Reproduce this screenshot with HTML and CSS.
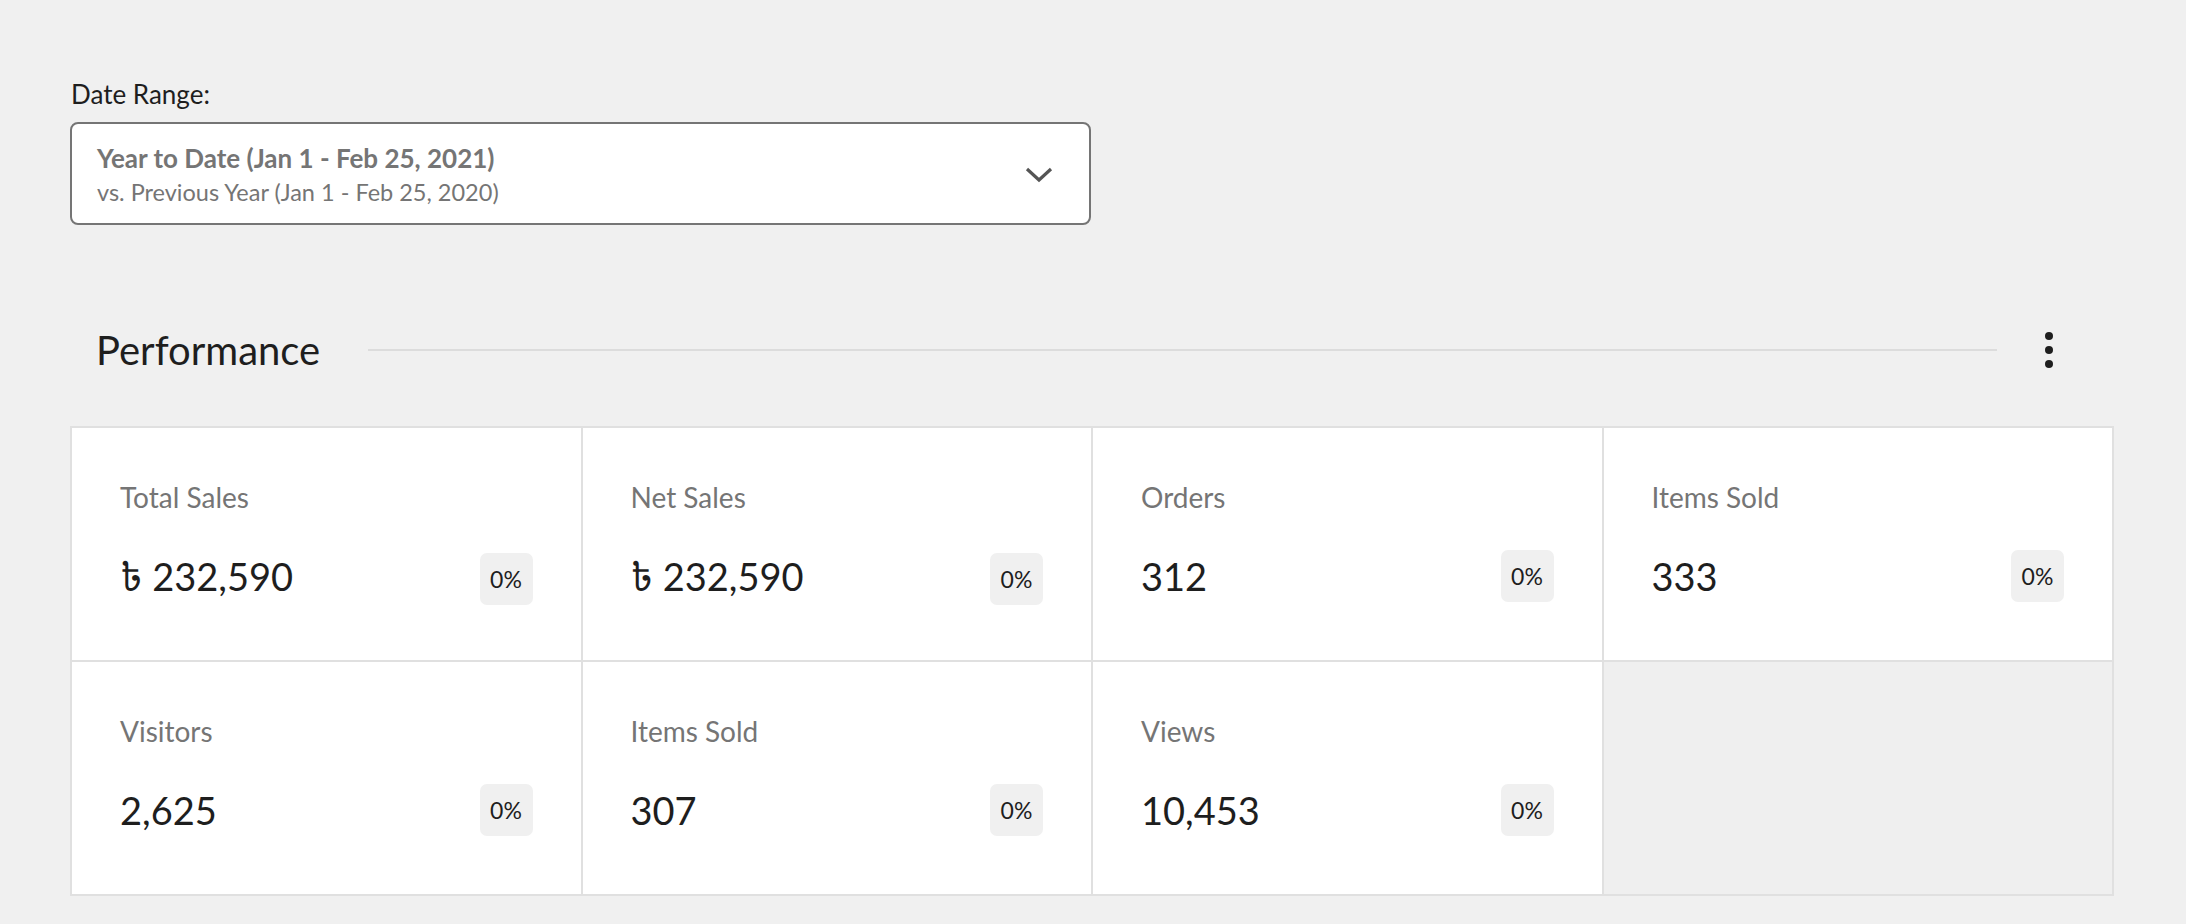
FILE: index.html
```html
<!DOCTYPE html>
<html lang="en">
<head>
<meta charset="utf-8">
<title>Analytics Overview</title>
<link rel="stylesheet" href="styles.css">
</head>
<body>
<main class="page">
  <section class="filters">
    <label class="filter-label">Date Range:</label>
    <button class="date-select" type="button">
      <span class="date-text">
        <span class="date-primary">Year to Date (Jan 1 - Feb 25, 2021)</span>
        <span class="date-secondary">vs. Previous Year (Jan 1 - Feb 25, 2020)</span>
      </span>
      <svg class="chevron" width="28" height="16" viewBox="0 0 28 16" aria-hidden="true">
        <path d="M2 2 L14 13 L26 2" fill="none" stroke="#555" stroke-width="3.2"/>
      </svg>
    </button>
  </section>

  <section class="performance">
    <header class="section-header">
      <h2 class="section-title">Performance</h2>
      <span class="section-rule"></span>
      <button class="more" type="button" aria-label="More">
        <span class="dot"></span><span class="dot"></span><span class="dot"></span>
      </button>
    </header>

    <div class="grid">
      <div class="card">
        <div class="card-label">Total Sales</div>
        <div class="card-row"><span class="card-value"><span class="currency">৳</span> 232,590</span><span class="delta">0%</span></div>
      </div>
      <div class="card">
        <div class="card-label">Net Sales</div>
        <div class="card-row"><span class="card-value"><span class="currency">৳</span> 232,590</span><span class="delta">0%</span></div>
      </div>
      <div class="card">
        <div class="card-label">Orders</div>
        <div class="card-row"><span class="card-value">312</span><span class="delta">0%</span></div>
      </div>
      <div class="card">
        <div class="card-label">Items Sold</div>
        <div class="card-row"><span class="card-value">333</span><span class="delta">0%</span></div>
      </div>
      <div class="card">
        <div class="card-label">Visitors</div>
        <div class="card-row"><span class="card-value">2,625</span><span class="delta">0%</span></div>
      </div>
      <div class="card">
        <div class="card-label">Items Sold</div>
        <div class="card-row"><span class="card-value">307</span><span class="delta">0%</span></div>
      </div>
      <div class="card">
        <div class="card-label">Views</div>
        <div class="card-row"><span class="card-value">10,453</span><span class="delta">0%</span></div>
      </div>
      <div class="card card-empty"></div>
    </div>
  </section>
</main>
</body>
</html>
```

FILE: styles.css
```css
* { box-sizing: border-box; }

html, body {
  margin: 0;
  background: #f0f0f0;
}

body {
  font-family: Lato, "Noto Sans", "DejaVu Sans", sans-serif;
  color: #1e1e1e;
}

.page {
  padding: 78px 72px 30px 70px;
}

.filters {
  display: flex;
  flex-direction: column;
  align-items: flex-start;
}

.filter-label {
  font-size: 26px;
  line-height: 32px;
  color: #1e1e1e;
  padding-left: 1px;
  margin-bottom: 12px;
}

.date-select {
  width: 1021px;
  height: 103px;
  display: flex;
  align-items: center;
  justify-content: space-between;
  padding: 2px 36px 0 25px;
  background: #fff;
  border: 2px solid #757575;
  border-radius: 8px;
  font-family: inherit;
  text-align: left;
  cursor: pointer;
}

.date-text {
  display: flex;
  flex-direction: column;
  gap: 3px;
}

.date-primary {
  font-size: 26px;
  line-height: 31px;
  font-weight: 700;
  color: #757575;
}

.date-secondary {
  font-size: 23.5px;
  line-height: 30px;
  color: #757575;
}

.chevron { display: block; }

.performance {
  margin-top: 90px;
}

.section-header {
  display: flex;
  align-items: center;
  height: 70px;
  margin-bottom: 41px;
}

.section-title {
  margin: 0 0 0 26px;
  font-size: 40px;
  font-weight: 400;
  line-height: 50px;
  color: #1e1e1e;
}

.section-rule {
  flex: 1;
  height: 2px;
  background: #dcdcdc;
  margin: 0 48px 0 48px;
}

.more {
  display: flex;
  flex-direction: column;
  align-items: center;
  gap: 6px;
  width: 8px;
  padding: 0;
  border: 0;
  background: transparent;
  margin-right: 61px;
  cursor: pointer;
}

.dot {
  width: 8px;
  height: 8px;
  border-radius: 50%;
  background: #1e1e1e;
}

.grid {
  display: grid;
  grid-template-columns: repeat(4, 1fr);
  grid-auto-rows: 234px;
  width: 2044px;
  border-top: 2px solid #e0e0e0;
  border-left: 2px solid #e0e0e0;
}

.card {
  background: #fff;
  border-right: 2px solid #e0e0e0;
  border-bottom: 2px solid #e0e0e0;
  padding: 51px 48px 0 48px;
}

.card-empty {
  background: #efefef;
}

.card-label {
  font-size: 28px;
  line-height: 36px;
  color: #757575;
}

.card-row {
  display: flex;
  align-items: center;
  justify-content: space-between;
  margin-top: 35px;
}

.card-value {
  font-size: 38px;
  line-height: 52px;
  color: #1e1e1e;
}

.currency {
  font-family: "Noto Sans Bengali", "Lohit Bengali", "FreeSerif", "DejaVu Sans", sans-serif;
}

.delta {
  display: inline-flex;
  align-items: center;
  justify-content: center;
  width: 53px;
  height: 52px;
  border-radius: 7px;
  background: #f0f0f0;
  font-size: 23px;
  color: #1e1e1e;
}
```
